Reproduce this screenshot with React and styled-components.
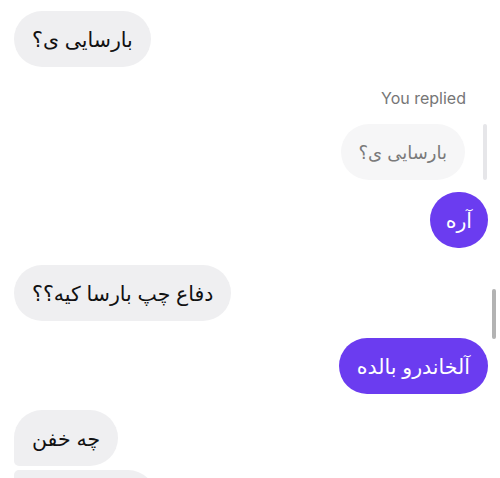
import styled, { createGlobalStyle } from 'styled-components';

const GlobalStyle = createGlobalStyle`
  html, body {
    margin: 0;
    padding: 0;
    background: #ffffff;
  }
  body {
    font-family: Inter, "DejaVu Sans", sans-serif;
  }
`;

// Thread container
const Thread = styled.div`
  position: relative;
  height: 478px;
  overflow: hidden;
  box-sizing: border-box;
  padding: 11px 12px 0 14px;
  display: flex;
  flex-direction: column;
  background: #ffffff;
`;

const Row = styled.div`
  display: flex;
  justify-content: ${(p) => (p.$mine ? 'flex-end' : 'flex-start')};
  margin-top: ${(p) => p.$gap || 0}px;
`;

const Bubble = styled.div`
  direction: rtl;
  box-sizing: border-box;
  min-width: 58px;
  height: 56px;
  padding: 0 ${(p) => (p.$tight ? 16 : 18)}px;
  display: flex;
  align-items: center;
  justify-content: center;
  border-radius: 28px;
  font-family: Inter, "DejaVu Sans", sans-serif;
  font-size: 20.5px;
  white-space: nowrap;
  background: ${(p) => (p.$mine ? '#6b3cf0' : '#efeff1')};
  color: ${(p) => (p.$mine ? '#ffffff' : '#111111')};
  ${(p) => p.$groupTop && 'border-bottom-left-radius: 5px;'}
  ${(p) => p.$groupBottom && 'border-top-left-radius: 5px;'}
`;

// Quoted message shown above a reply
const ReplyBlock = styled.div`
  display: flex;
  flex-direction: column;
  align-items: flex-end;
  margin-top: 20px;
`;

const ReplyLabel = styled.div`
  font-family: Inter, "Liberation Sans", sans-serif;
  font-size: 16px;
  line-height: 22px;
  color: #767676;
  margin-right: 22px;
`;

const QuoteRow = styled.div`
  display: flex;
  align-items: stretch;
  gap: 18px;
  margin-top: 15px;
`;

const QuoteBubble = styled(Bubble)`
  font-size: 18px;
  background: #f6f6f7;
  color: #7a7a7a;
`;

const QuoteBar = styled.div`
  width: 4px;
  border-radius: 2px;
  background: #e6e6e9;
  margin-right: 1px;
`;

const ScrollThumb = styled.div`
  position: absolute;
  top: 289px;
  right: 4px;
  width: 4px;
  height: 50px;
  border-radius: 2px;
  background: #b3b3b3;
`;

export default function App() {
  return (
    <>
      <GlobalStyle />
      <Thread>
        <Row>
          <Bubble>بارسایی ی؟</Bubble>
        </Row>

        <ReplyBlock>
          <ReplyLabel>You replied</ReplyLabel>
          <QuoteRow>
            <QuoteBubble>بارسایی ی؟</QuoteBubble>
            <QuoteBar />
          </QuoteRow>
        </ReplyBlock>

        <Row $mine $gap={12}>
          <Bubble $mine $tight>آره</Bubble>
        </Row>

        <Row $gap={17}>
          <Bubble>دفاع چپ بارسا کیه؟؟</Bubble>
        </Row>

        <Row $mine $gap={17}>
          <Bubble $mine>آلخاندرو بالده</Bubble>
        </Row>

        <Row $gap={16}>
          <Bubble $groupTop>چه خفن</Bubble>
        </Row>
        <Row $gap={4}>
          <Bubble $groupBottom>بازیکن خوبیه</Bubble>
        </Row>

        <ScrollThumb />
      </Thread>
    </>
  );
}
